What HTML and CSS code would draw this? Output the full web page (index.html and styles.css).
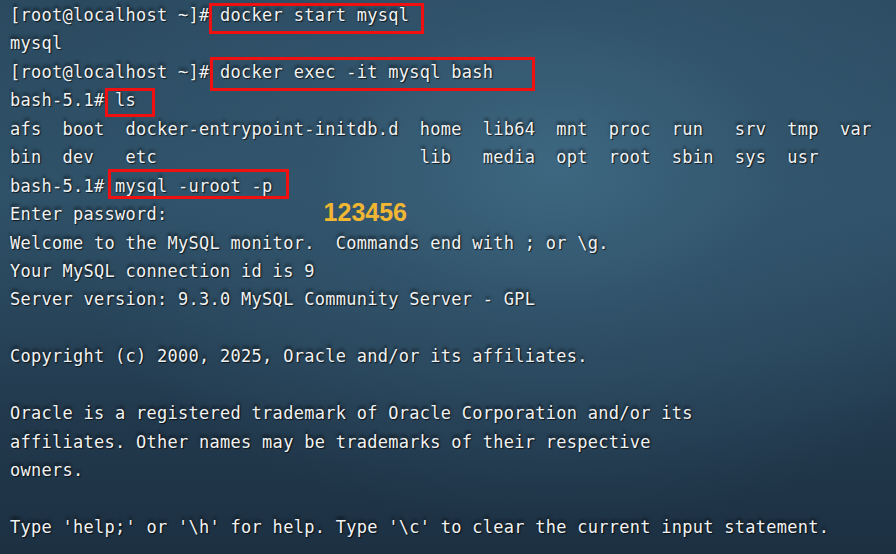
FILE: index.html
```html
<!DOCTYPE html>
<html lang="en">
<head>
<meta charset="utf-8">
<title>Terminal</title>
<link rel="stylesheet" href="styles.css">
</head>
<body>
<main class="term">
<pre class="out">[root@localhost ~]# docker start mysql
mysql
[root@localhost ~]# docker exec -it mysql bash
bash-5.1# ls
afs  boot  docker-entrypoint-initdb.d  home  lib64  mnt  proc  run   srv  tmp  var
bin  dev   etc                         lib   media  opt  root  sbin  sys  usr
bash-5.1# mysql -uroot -p
Enter password:<span class="pwd">123456</span>
Welcome to the MySQL monitor.  Commands end with ; or \g.
Your MySQL connection id is 9
Server version: 9.3.0 MySQL Community Server - GPL

Copyright (c) 2000, 2025, Oracle and/or its affiliates.

Oracle is a registered trademark of Oracle Corporation and/or its
affiliates. Other names may be trademarks of their respective
owners.

Type 'help;' or '\h' for help. Type '\c' to clear the current input statement.</pre>
<div class="mark mark-start"></div>
<div class="mark mark-exec"></div>
<div class="mark mark-ls"></div>
<div class="mark mark-mysql"></div>
</main>
</body>
</html>
```
FILE: styles.css
```css
html, body {
  margin: 0;
  padding: 0;
  width: 896px;
  height: 554px;
  overflow: hidden;
}
.term {
  position: relative;
  width: 896px;
  height: 554px;
  background:
    radial-gradient(ellipse 520px 360px at 62% 30%, rgba(62,104,130,0.95) 0%, rgba(52,88,112,0.6) 45%, rgba(40,66,86,0) 100%),
    linear-gradient(180deg, #2b4a60 0%, #2f5269 35%, #22394d 75%, #1c3042 100%);
}
.out {
  margin: 0;
  padding: 1px 0 0 10px;
  font-family: "DejaVu Sans Mono", "Liberation Mono", monospace;
  font-size: 17px;
  letter-spacing: 0.27px;
  line-height: 28.44px;
  color: #f0f2f3;
  white-space: pre;
  text-shadow: 0 -3px 3px rgba(0,0,0,0.55), 1px 1px 1px rgba(0,0,0,0.7);
}
.mark {
  position: absolute;
  border: 3px solid #f01010;
  box-sizing: border-box;
}
.mark-start { left: 209px; top: 3px; width: 215px; height: 31px; }
.mark-exec  { left: 210px; top: 57px; width: 325px; height: 34px; }
.mark-ls    { left: 105px; top: 88px; width: 50px; height: 29px; }
.mark-mysql { left: 108px; top: 169px; width: 181px; height: 30px; }
.pwd {
  margin-left: 156px;
  font-family: "Liberation Sans", Arial, sans-serif;
  font-weight: bold;
  font-size: 25px;
  letter-spacing: 0;
  line-height: 0;
  vertical-align: -1px;
  color: #f2b732;
  text-shadow: none;
}
```
